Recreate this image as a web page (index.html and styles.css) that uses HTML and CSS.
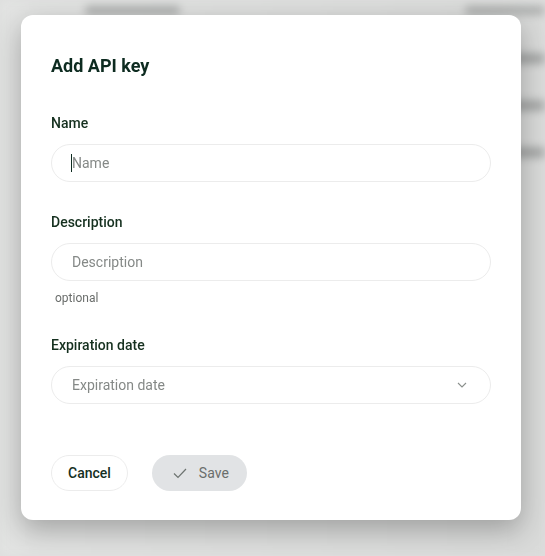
FILE: index.html
```html
<!DOCTYPE html>
<html lang="en">
<head>
    <meta charset="UTF-8">
    <meta name="viewport" content="width=device-width, initial-scale=1.0">
    <title>Add API key</title>
    <link rel="stylesheet" href="styles.css">
</head>
<body>
    <!-- Page behind the modal (blurred) -->
    <div class="backdrop">
        <div class="bg-row bg-head">
            <span class="bg-text bg-text-a"></span>
            <span class="bg-text bg-text-b"></span>
        </div>
        <div class="bg-row"><span class="bg-text bg-text-c"></span></div>
        <div class="bg-row"><span class="bg-text bg-text-c"></span></div>
        <div class="bg-row"><span class="bg-text bg-text-c"></span></div>
    </div>

    <!-- Modal -->
    <div class="overlay">
        <div class="modal">
            <h2 class="modal-title">Add API key</h2>

            <div class="field">
                <label class="field-label" for="key-name">Name</label>
                <div class="input-wrap">
                    <input id="key-name" class="input" type="text" placeholder="Name">
                    <span class="caret"></span>
                </div>
            </div>

            <div class="field">
                <label class="field-label" for="key-desc">Description</label>
                <input id="key-desc" class="input" type="text" placeholder="Description">
                <div class="field-hint">optional</div>
            </div>

            <div class="field">
                <label class="field-label">Expiration date</label>
                <div class="select">
                    <span class="select-placeholder">Expiration date</span>
                    <svg class="chevron" width="10" height="6" viewBox="0 0 10 6">
                        <path d="M1 1l4 4 4-4" fill="none" stroke="#8a8f8c" stroke-width="1.1"/>
                    </svg>
                </div>
            </div>

            <div class="modal-buttons">
                <button class="btn btn-cancel">Cancel</button>
                <button class="btn btn-save">
                    <svg width="14" height="11" viewBox="0 0 14 11">
                        <path d="M1 5.5l4 4 8-8.5" fill="none" stroke="#6d7370" stroke-width="1.2"/>
                    </svg>
                    Save
                </button>
            </div>
        </div>
    </div>
</body>
</html>
```

FILE: styles.css
```css
/* Page de fond */
body {
    margin: 0;
    background: #dedfde;
    font-family: Roboto, "Liberation Sans", sans-serif;
    overflow: hidden;
}

.backdrop {
    height: 556px;
    filter: blur(4px);
    background: linear-gradient(90deg, #e2e3e2, #d9dad9);
}

.bg-row {
    display: flex;
    align-items: center;
    justify-content: flex-end;
    height: 47px;
}

.bg-head {
    height: 20px;
    justify-content: space-between;
    padding-left: 85px;
    margin-bottom: 15px;
}

.bg-text {
    display: block;
    height: 9px;
    background: #adafae;
    border-radius: 4px;
}

.bg-text-a { width: 95px; }
.bg-text-b { width: 80px; }
.bg-text-c { width: 40px; height: 11px; background: #a6a8a7; }

/* Modal */
.overlay {
    position: fixed;
    top: 0;
    left: 0;
    right: 0;
    bottom: 0;
    padding: 15px 0 0 21px;
}

.modal {
    box-sizing: border-box;
    width: 500px;
    height: 505px;
    background: #fff;
    border-radius: 12px;
    padding: 39px 30px 29px;
    box-shadow: 0 10px 28px rgba(0,0,0,0.28);
    display: flex;
    flex-direction: column;
}

.modal-title {
    margin: 0 0 35px 0;
    font-size: 18px;
    line-height: 24px;
    font-weight: 700;
    color: #0d2b20;
}

.field {
    margin-bottom: 30px;
}

.field-label {
    display: block;
    font-size: 14px;
    line-height: 20px;
    font-weight: 500;
    color: #15301f;
    margin-bottom: 11px;
}

.input-wrap {
    position: relative;
}

.input,
.select {
    box-sizing: border-box;
    width: 100%;
    height: 38px;
    border: 1px solid #ececec;
    border-radius: 19px;
    padding: 0 20px;
    font-family: inherit;
    font-size: 14px;
    color: #333;
    background: #fff;
    outline: none;
}

.input::placeholder,
.select-placeholder {
    color: #858987;
}

.caret {
    position: absolute;
    left: 20px;
    top: 10px;
    width: 1px;
    height: 18px;
    background: #0d2b20;
}

.field-hint {
    margin: 9px 0 -1px 4px;
    font-size: 12px;
    line-height: 16px;
    color: #6a6d6b;
}

.select {
    display: flex;
    align-items: center;
    justify-content: space-between;
    padding-right: 23px;
}

.modal-buttons {
    margin-top: auto;
    display: flex;
    gap: 24px;
}

.btn {
    height: 36px;
    border-radius: 18px;
    font-family: inherit;
    font-size: 14px;
    font-weight: 500;
    cursor: pointer;
    display: flex;
    align-items: center;
}

.btn-cancel {
    background: #fff;
    border: 1px solid #ececec;
    color: #15301f;
    padding: 0 16px;
}

.btn-save {
    background: #e1e3e5;
    border: none;
    color: #6a6e6c;
    font-weight: 400;
    padding: 0 18px 0 21px;
    gap: 12px;
}
```
